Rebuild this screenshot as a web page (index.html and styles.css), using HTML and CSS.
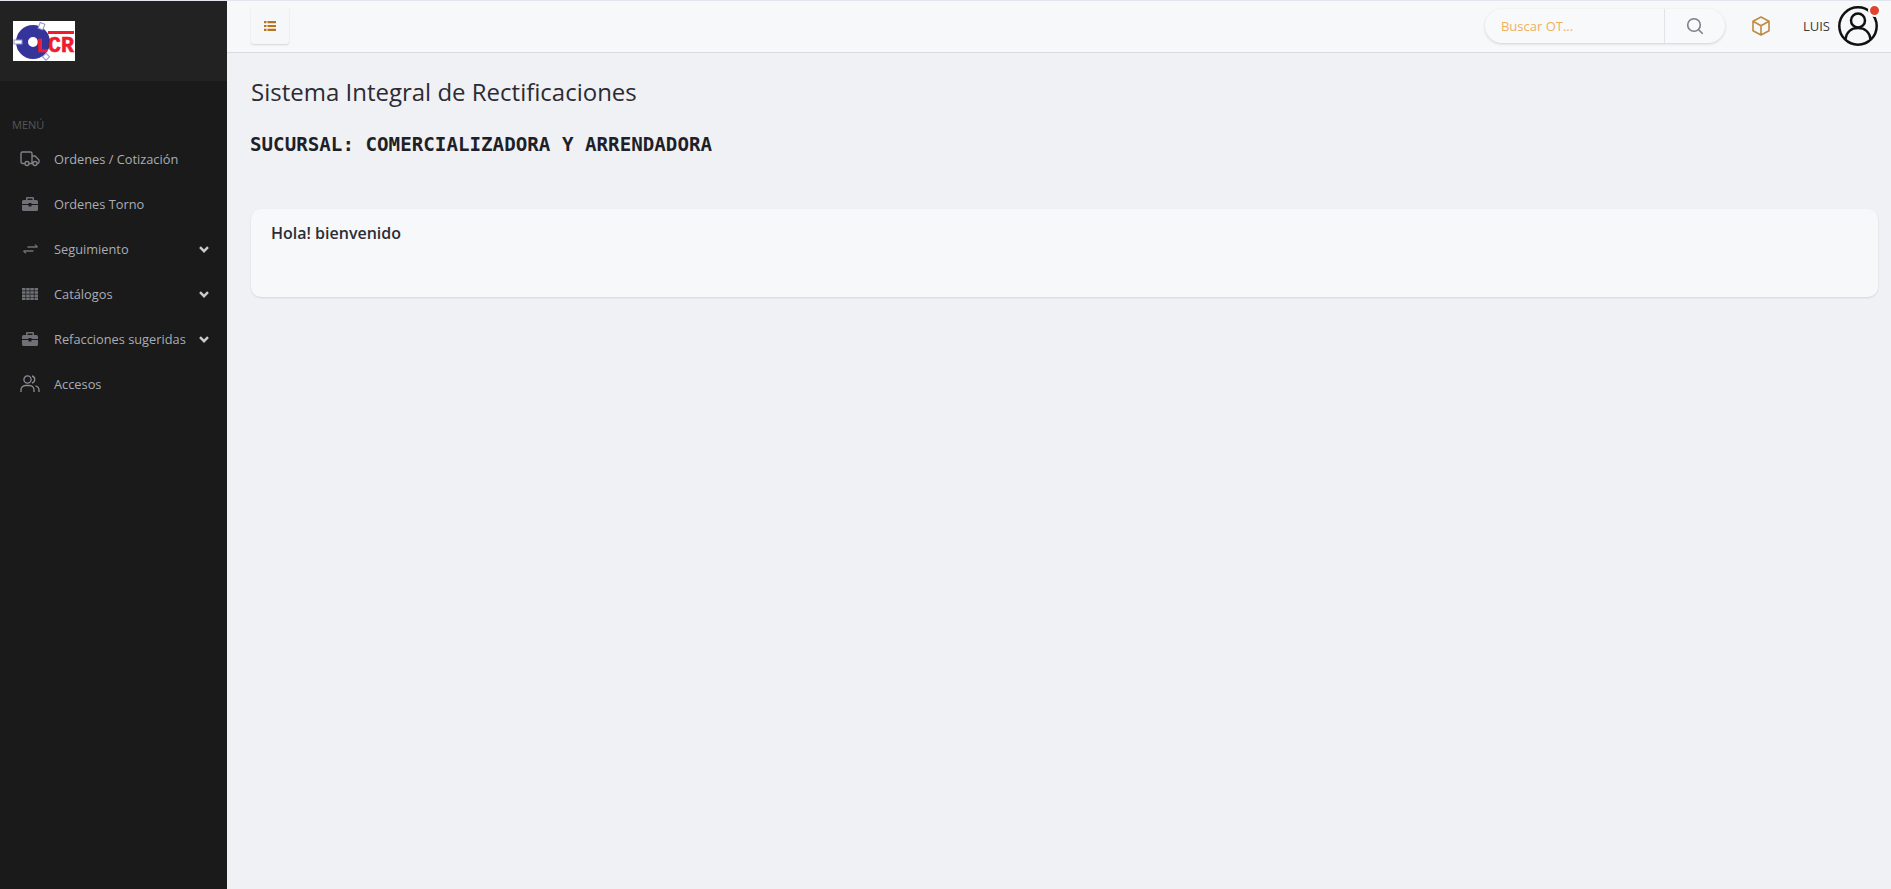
FILE: index.html
```html
<!DOCTYPE html>
<html lang="es">
<head>
<meta charset="utf-8">
<title>Sistema Integral de Rectificaciones</title>
<link rel="stylesheet" href="styles.css">
</head>
<body>
<div class="app">
  <aside class="sidebar">
    <div class="brand">
      <svg class="logo" viewBox="0 0 62 40" width="62" height="40">
        <rect width="62" height="40" fill="#fff"/>
        <circle cx="20" cy="21" r="11" fill="none" stroke="#34349a" stroke-width="12"/>
        <rect x="26" y="2" width="5" height="6" fill="#fff" stroke="#8f95cf" transform="rotate(20 28 5)"/>
        <rect x="1" y="19" width="8" height="4" fill="#fff" stroke="#8f95cf"/>
        <rect x="31" y="33" width="5" height="5" fill="#fff" stroke="#8f95cf" transform="rotate(45 33 35)"/>
        <rect x="35" y="10" width="26" height="3" fill="#ee1c2e"/>
        <text class="logo-l" x="23" y="31">L</text>
        <text class="logo-text" x="35" y="31">CR</text>
      </svg>
    </div>
    <nav class="menu">
      <div class="menu-title">MENÚ</div>
      <a class="item">
        <span class="ico"><svg viewBox="0 0 20 16" width="20" height="16"><path d="M5 12.500H2.500A1.500 1.500 0 0 1 1 11V2.500A1.500 1.500 0 0 1 2.500 1h8A1.500 1.500 0 0 1 12 2.500v10H9M12 5h3l4 4v2a1.500 1.500 0 0 1-1.500 1.500H17M13 12.500h.500M5 12.500a2 2 0 1 0 4 0a2 2 0 1 0-4 0M13 12.500a2 2 0 1 0 4 0a2 2 0 1 0-4 0" fill="none" stroke="#7f8288" stroke-width="1.400"/></svg></span>
        <span class="label">Ordenes / Cotización</span>
      </a>
      <a class="item">
        <span class="ico"><svg viewBox="0 0 16 14" width="16" height="14"><path class="fill" d="M5 0h6a1 1 0 0 1 1 1v2h2.500A1.500 1.500 0 0 1 16 4.500V7H9.500V6h-3v1H0V4.500A1.500 1.500 0 0 1 1.500 3H4V1a1 1 0 0 1 1-1zm.5 1.500V3h5V1.500zM0 8h6.500v1.500h3V8H16v4.500a1.500 1.500 0 0 1-1.500 1.500h-13A1.500 1.500 0 0 1 0 12.500z"/></svg></span>
        <span class="label">Ordenes Torno</span>
      </a>
      <a class="item">
        <span class="ico"><svg viewBox="0 0 15 10" width="15" height="10"><path d="M14.500 3H4.500M14.500 3 12 .600M.500 7h10M.500 7 3 9.400" fill="none" stroke="#6f7176" stroke-width="1.300"/></svg></span>
        <span class="label">Seguimiento</span>
        <svg class="chev" viewBox="0 0 10 7"><path d="M1 1.200 5 5.200l4-4" fill="none" stroke="#c9cbd0" stroke-width="2.400"/></svg>
      </a>
      <a class="item">
        <span class="ico"><svg viewBox="0 0 16 12" width="16" height="12"><path class="fill" d="M0 0h3.500v2.500H0zM4.200 0h3.500v2.500H4.200zM8.300 0h3.500v2.500H8.300zM12.500 0H16v2.500h-3.500zM0 3.200h3.500v2.500H0zM4.200 3.200h3.500v2.500H4.200zM8.300 3.200h3.500v2.500H8.300zM12.500 3.200H16v2.500h-3.500zM0 6.400h3.500v2.500H0zM4.200 6.400h3.500v2.500H4.200zM8.300 6.400h3.500v2.500H8.300zM12.500 6.400H16v2.500h-3.500zM0 9.500h3.500V12H0zM4.200 9.500h3.500V12H4.200zM8.300 9.500h3.500V12H8.300zM12.500 9.500H16V12h-3.500z"/></svg></span>
        <span class="label">Catálogos</span>
        <svg class="chev" viewBox="0 0 10 7"><path d="M1 1.200 5 5.200l4-4" fill="none" stroke="#c9cbd0" stroke-width="2.400"/></svg>
      </a>
      <a class="item">
        <span class="ico"><svg viewBox="0 0 16 14" width="16" height="14"><path class="fill" d="M5 0h6a1 1 0 0 1 1 1v2h2.500A1.500 1.500 0 0 1 16 4.500V7H9.500V6h-3v1H0V4.500A1.500 1.500 0 0 1 1.500 3H4V1a1 1 0 0 1 1-1zm.5 1.500V3h5V1.500zM0 8h6.500v1.500h3V8H16v4.500a1.500 1.500 0 0 1-1.500 1.500h-13A1.500 1.500 0 0 1 0 12.500z"/></svg></span>
        <span class="label">Refacciones sugeridas</span>
        <svg class="chev" viewBox="0 0 10 7"><path d="M1 1.200 5 5.200l4-4" fill="none" stroke="#c9cbd0" stroke-width="2.400"/></svg>
      </a>
      <a class="item">
        <span class="ico"><svg viewBox="0 0 20 17" width="20" height="17"><circle cx="7.500" cy="4.500" r="3.600" fill="none" stroke="#8a8d93" stroke-width="1.300"/><path d="M1 17v-2a4.500 4.500 0 0 1 4.500-4.500h4A4.500 4.500 0 0 1 14 15v2M12 1a3.600 3.600 0 0 1 0 7M15.500 10.800A4.500 4.500 0 0 1 19 15v2" fill="none" stroke="#8a8d93" stroke-width="1.300"/></svg></span>
        <span class="label">Accesos</span>
      </a>
    </nav>
  </aside>
  <div class="main">
    <header class="topbar">
      <button class="toggle" type="button">
        <svg viewBox="0 0 12 10" width="12" height="10"><path d="M0 0h2.500v2.200H0zM3.500 0H12v2.200H3.500zM0 3.900h2.500v2.200H0zM3.500 3.900H12v2.200H3.500zM0 7.800h2.500V10H0zM3.500 7.800H12V10H3.500z" fill="#b8741f"/></svg>
      </button>
      <div class="top-right">
        <div class="search">
          <span class="search-text">Buscar OT...</span>
          <span class="search-btn">
            <svg viewBox="0 0 18 18" width="18" height="18"><circle cx="8" cy="8" r="6.300" fill="none" stroke="#7b7f87" stroke-width="1.600"/><path d="m12.700 12.700 4 4" fill="none" stroke="#7b7f87" stroke-width="1.600"/></svg>
          </span>
        </div>
        <svg class="box" viewBox="0 0 18 20" width="18" height="20"><path d="M9 1 17 5.300v9.400L9 19l-8-4.300V5.300zM1 5.300 9 9.800l8-4.500M9 9.800V19" fill="none" stroke="#c08a42" stroke-width="1.600" stroke-linejoin="round"/></svg>
        <span class="user">LUIS</span>
        <span class="avatar">
          <svg viewBox="0 0 40 40" width="40" height="40"><circle cx="20" cy="20" r="18.700" fill="none" stroke="#111" stroke-width="2.500"/><circle cx="20" cy="14.500" r="7" fill="none" stroke="#111" stroke-width="2.500"/><path d="M7.500 33c1-7 6-11 12.500-11s11.500 4 12.500 11" fill="none" stroke="#111" stroke-width="2.500"/></svg>
          <span class="dot"></span>
        </span>
      </div>
    </header>
    <main class="content">
      <h1 class="title">Sistema Integral de Rectificaciones</h1>
      <h2 class="branch">SUCURSAL: COMERCIALIZADORA Y ARRENDADORA</h2>
      <section class="card">
        <h3 class="card-title">Hola! bienvenido</h3>
      </section>
    </main>
  </div>
</div>
</body>
</html>
```
FILE: styles.css
```css
* { box-sizing: border-box; }
html, body { margin: 0; height: 100%; }
body {
  font-family: "Open Sans", "Liberation Sans", sans-serif;
  background: #f0f1f5;
  color: #2b2b33;
  overflow: hidden;
}
.app { display: flex; height: 889px; border-top: 1px solid #e2e4ee; }
.sidebar { width: 227px; flex: none; background: #1a1a1a; }
.brand { height: 80px; background: #222222; padding: 20px 0 0 13px; }
.logo { display: block; }
.logo-text, .logo-l { font-family: "Liberation Mono", monospace; font-weight: 700; fill: #ee1c2e; stroke: #ee1c2e; stroke-width: .6px; }
.logo-text { font-size: 21.600px; }
.logo-l { font-size: 20px; }
.menu { padding-top: 37px; }
.menu-title { font-size: 11px; line-height: 14px; color: #55565a; padding-left: 12px; margin-bottom: 4px; }
.item { display: flex; align-items: center; height: 45px; padding-left: 20px; color: #a9adb6; font-size: 12.800px; }
.ico { width: 20px; height: 18px; flex: none; margin-right: 14px; display: flex; align-items: center; justify-content: center; }
.fill { fill: #6f7176; }
.label { flex: 1; white-space: nowrap; }
.chev { width: 10px; height: 7px; flex: none; margin: 2px 18px 0 0; }
.main { flex: 1; min-width: 0; display: flex; flex-direction: column; }
.topbar {
  height: 52px; flex: none;
  display: flex; align-items: center; justify-content: space-between;
  background: #f7f8fa;
  border-bottom: 1px solid #d8dae2;
  padding: 0 13px 2px 24px;
}
.toggle {
  width: 38px; height: 37px; padding: 0;
  display: flex; align-items: center; justify-content: center;
  background: #f6f7f9; border: 0; border-radius: 3px;
  box-shadow: 0 1px 2px rgba(0,0,0,.14);
}
.top-right { display: flex; align-items: center; }
.search {
  width: 240px; height: 34px; display: flex; align-items: stretch;
  background: #f8f9fb; border-radius: 17px;
  box-shadow: 0 1px 3px rgba(0,0,0,.16);
}
.search-text { width: 180px; padding-left: 16px; font-size: 13px; line-height: 35px; color: #f0b05c; border-right: 1px solid #e2e3e8; }
.search-btn { flex: 1; display: flex; align-items: center; justify-content: center; }
.box { margin-left: 27px; flex: none; }
.user { margin-left: 33px; font-size: 13px; color: #3a3b40; }
.avatar { position: relative; display: block; width: 40px; height: 40px; margin-left: 8px; }
.avatar svg { display: block; }
.dot {
  position: absolute; top: -2px; right: -3px;
  box-sizing: content-box; width: 9px; height: 9px;
  border-radius: 50%;
  background: #e0432f; border: 2px solid #fff;
}
.content { padding: 23px 13px 0 24px; }
.title { margin: 0; font-size: 24px; font-weight: 400; line-height: 32px; color: #2b2b33; }
.branch {
  margin: 25px 0 0 -1px;
  font-family: "DejaVu Sans Mono", monospace;
  font-size: 19.200px; font-weight: 700; line-height: 24px; color: #1f1f28;
}
.card {
  margin-top: 52px; height: 88px; padding: 13px 20px;
  background: #f7f8fa; border-radius: 10px;
  box-shadow: 0 1px 2px rgba(0,0,0,.12);
}
.card-title { margin: 0; font-size: 16px; font-weight: 600; line-height: 22px; color: #2d2d33; }
```
